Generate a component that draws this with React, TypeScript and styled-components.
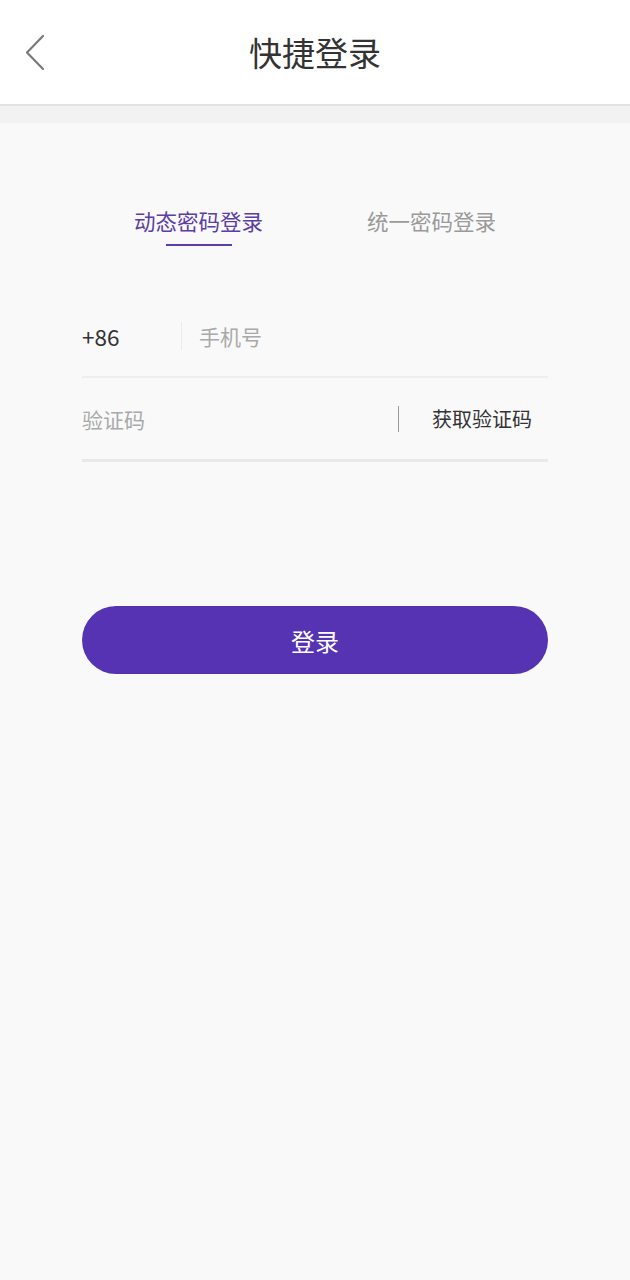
import React, { useState } from 'react';
import styled, { createGlobalStyle } from 'styled-components';

const GlobalStyle = createGlobalStyle`
    html, body {
        margin: 0;
        padding: 0;
        background: #f9f9f9;
        font-family: "Noto Sans CJK SC", "Noto Sans", sans-serif;
    }
`

type TabProps = {
    active: boolean,
}

const BackIcon = () => (
    <svg width="24" height="40" viewBox="0 0 24 40" fill="none">
        <path d="M19 3 L3 19.5 L19 36" stroke="#7a7a7a" strokeWidth="2.2" strokeLinecap="round" strokeLinejoin="round"/>
    </svg>
)

export default function App() {
    const [tab, setTab] = useState(0);

    return(
        <>
            <GlobalStyle/>
            <Page>
                <Header>
                    <BackButton><BackIcon/></BackButton>
                    <Title>快捷登录</Title>
                </Header>
                <Band/>
                <Content>
                    <Tabs>
                        <Tab active={tab === 0} onClick={() => setTab(0)}>动态密码登录</Tab>
                        <Tab active={tab === 1} onClick={() => setTab(1)}>统一密码登录</Tab>
                    </Tabs>
                    <Form>
                        <Row>
                            <Prefix>+86</Prefix>
                            <LightDivider/>
                            <Field placeholder="手机号"/>
                        </Row>
                        <Row thick>
                            <Field placeholder="验证码"/>
                            <Divider/>
                            <CodeButton>获取验证码</CodeButton>
                        </Row>
                    </Form>
                    <LoginButton>登录</LoginButton>
                </Content>
            </Page>
        </>
    )
}

const Page = styled.div`
    min-height: 1280px;
    background: #f9f9f9;
`

const Header = styled.div`
    position: relative;
    height: 104px;
    background: #fff;
    border-bottom: 2px solid #e2e2e2;
    display: flex;
    align-items: center;
    justify-content: center;
`

const BackButton = styled.div`
    position: absolute;
    left: 24px;
    top: 33px;
    width: 24px;
    height: 40px;
    cursor: pointer;
`

const Title = styled.h1`
    margin: 0;
    font-size: 33px;
    font-weight: 400;
    color: #333;
`

const Band = styled.div`
    height: 17px;
    background: #f2f2f2;
`

const Content = styled.div`
    padding: 0 82px;
`

const Tabs = styled.div`
    display: flex;
    padding-top: 78px;
`

const Tab = styled.div<TabProps>`
    flex: 1;
    display: flex;
    flex-direction: column;
    align-items: center;
    font-size: 21.5px;
    line-height: 40px;
    color: ${({active}) => active ? '#5b3ea6' : '#9a9a9a'};
    cursor: pointer;

    &::after{
        content: '';
        margin-top: 3px;
        width: 66px;
        height: 2px;
        background: ${({active}) => active ? '#5b3ea6' : 'transparent'};
    }
`

const Form = styled.div`
    padding-top: 49px;
`

const Row = styled.div<{thick?: boolean}>`
    display: flex;
    align-items: center;
    height: 81px;
    border-bottom: ${({thick}) => thick ? '3px solid #e9e9e9' : '2px solid #eeeeee'};
`

const Prefix = styled.span`
    width: 99px;
    font-size: 22.5px;
    color: #333;
`

const LightDivider = styled.div`
    width: 1px;
    height: 28px;
    background: #ececec;
    margin-right: 17px;
`

const Divider = styled.div`
    width: 1px;
    height: 26px;
    background: #9a9a9a;
    margin-right: 33px;
`

const Field = styled.input`
    flex: 1;
    min-width: 0;
    border: none;
    outline: none;
    background: transparent;
    padding: 0;
    font-family: inherit;
    font-size: 21px;
    color: #333;

    &::placeholder{
        color: #a9a9a9;
    }
`

const CodeButton = styled.span`
    font-size: 20px;
    color: #333;
    margin-right: 16px;
    cursor: pointer;
`

const LoginButton = styled.button`
    display: block;
    width: 100%;
    height: 68px;
    margin-top: 144px;
    border: none;
    border-radius: 34px;
    background: #5533b3;
    color: #fff;
    font-family: inherit;
    font-size: 24px;
    cursor: pointer;
`
